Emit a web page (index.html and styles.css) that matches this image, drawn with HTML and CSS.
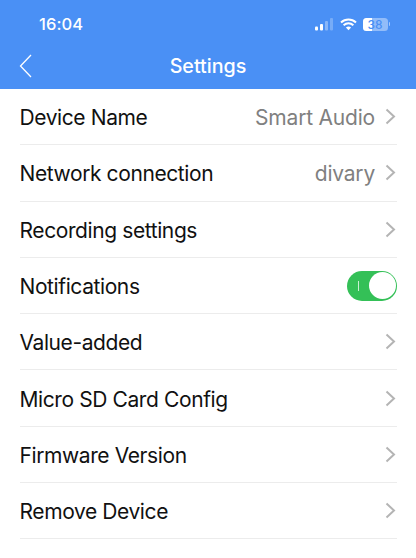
FILE: index.html
```html
<!DOCTYPE html>
<html lang="en">
<head>
<meta charset="utf-8">
<title>Settings</title>
<link rel="stylesheet" href="styles.css">
</head>
<body>
<header class="header">
  <div class="status">
    <span class="time">16:04</span>
    <div class="status-icons">
      <svg class="signal" width="19" height="13" viewBox="0 0 19 13"><rect x="0" y="8.5" width="3" height="4" rx="1" fill="#fff"/><rect x="5" y="6" width="3" height="6.500" rx="1" fill="#fff"/><rect x="10" y="3" width="3" height="9.500" rx="1" fill="#fff" opacity=".35"/><rect x="15" y="0" width="3" height="12.500" rx="1" fill="#fff" opacity=".25"/></svg>
      <svg class="wifi" width="17" height="13" viewBox="0 0 17 13"><path d="M1 4.600C5.300.6 11.700.6 16 4.600M3.600 7.300C6.500 4.700 10.500 4.700 13.400 7.300" fill="none" stroke="#fff" stroke-width="2"/><path d="M5.900 9.500C7.500 8.200 9.500 8.200 11.100 9.500L8.500 12.300Z" fill="#fff"/></svg>
      <div class="battery"><span class="battery-level"></span><span class="battery-text">38</span></div>
      <span class="battery-cap"></span>
    </div>
  </div>
  <div class="nav">
    <svg class="back" width="13" height="24" viewBox="0 0 13 24"><path d="M12 1 1.500 12 12 23" fill="none" stroke="#fff" stroke-width="1.300"/></svg>
    <h1 class="title">Settings</h1>
  </div>
</header>
<main class="list">
  <div class="row"><span class="label">Device Name</span><span class="value">Smart Audio</span><svg class="chev" width="11" height="17" viewBox="0 0 11 17"><path d="M1.500 1.500 9 8.500 1.500 15.500" fill="none" stroke="#b4b4b4" stroke-width="2"/></svg></div>
  <div class="row"><span class="label">Network connection</span><span class="value">divary</span><svg class="chev" width="11" height="17" viewBox="0 0 11 17"><path d="M1.500 1.500 9 8.500 1.500 15.500" fill="none" stroke="#b4b4b4" stroke-width="2"/></svg></div>
  <div class="row"><span class="label">Recording settings</span><svg class="chev" width="11" height="17" viewBox="0 0 11 17"><path d="M1.500 1.500 9 8.500 1.500 15.500" fill="none" stroke="#b4b4b4" stroke-width="2"/></svg></div>
  <div class="row"><span class="label">Notifications</span><div class="toggle"><span class="toggle-mark"></span><span class="knob"></span></div></div>
  <div class="row"><span class="label">Value-added</span><svg class="chev" width="11" height="17" viewBox="0 0 11 17"><path d="M1.500 1.500 9 8.500 1.500 15.500" fill="none" stroke="#b4b4b4" stroke-width="2"/></svg></div>
  <div class="row"><span class="label">Micro SD Card Config</span><svg class="chev" width="11" height="17" viewBox="0 0 11 17"><path d="M1.500 1.500 9 8.500 1.500 15.500" fill="none" stroke="#b4b4b4" stroke-width="2"/></svg></div>
  <div class="row"><span class="label">Firmware Version</span><svg class="chev" width="11" height="17" viewBox="0 0 11 17"><path d="M1.500 1.500 9 8.500 1.500 15.500" fill="none" stroke="#b4b4b4" stroke-width="2"/></svg></div>
  <div class="row"><span class="label">Remove Device</span><svg class="chev" width="11" height="17" viewBox="0 0 11 17"><path d="M1.500 1.500 9 8.500 1.500 15.500" fill="none" stroke="#b4b4b4" stroke-width="2"/></svg></div>
</main>
</body>
</html>
```
FILE: styles.css
```css
* { box-sizing: border-box; }
html, body { margin: 0; padding: 0; }
body {
  width: 416px;
  height: 558px;
  overflow: hidden;
  background: #fff;
  font-family: Inter, "Liberation Sans", sans-serif;
}
.header {
  height: 89px;
  background: #4a90f5;
  color: #fff;
  padding: 14px 20px 0;
}
.status {
  display: flex;
  align-items: center;
  justify-content: space-between;
  height: 20px;
  padding-left: 19px;
}
.time { font-size: 16.500px; font-weight: 500; letter-spacing: .1px; }
.status-icons { display: flex; align-items: center; padding-right: 6px; }
.signal { margin-right: 6px; }
.wifi { margin-right: 6px; }
.battery {
  position: relative;
  width: 25px;
  height: 13px;
  border-radius: 3.500px;
  background: rgba(255,255,255,.4);
  overflow: hidden;
  display: flex;
  align-items: center;
  justify-content: center;
}
.battery-level { position: absolute; left: 0; top: 0; bottom: 0; width: 38%; background: #fff; }
.battery-text { position: relative; font-size: 12px; font-weight: 500; color: #4a90f5; }
.battery-cap { width: 1.500px; height: 4px; margin-left: 1px; background: rgba(255,255,255,.5); border-radius: 0 1px 1px 0; }
.nav {
  position: relative;
  display: flex;
  align-items: center;
  justify-content: center;
  height: 24px;
  margin-top: 20px;
}
.back { position: absolute; left: -1px; top: 0; }
.title { margin: 0; font-size: 19.700px; font-weight: 500; }
.list { padding: 0 19.500px 0 19.500px; }
.row {
  display: flex;
  align-items: center;
  height: 56.300px;
  border-bottom: 1px solid #ececec;
}
.label { flex: 1; font-size: 21px; letter-spacing: -.4px; color: #111; padding-top: 2px; }
.value { font-size: 21px; letter-spacing: -.2px; color: #808080; margin-right: 10px; padding-top: 2px; }
.chev { display: block; margin-right: .500px; }
.toggle {
  position: relative;
  width: 50px;
  height: 30px;
  margin-right: -.500px;
  border-radius: 15px;
  background: #34c057;
}
.toggle-mark { position: absolute; left: 11px; top: 10px; width: 1px; height: 10px; background: #c9f0d3; }
.knob {
  position: absolute;
  right: 1.500px;
  top: 1.500px;
  width: 27px;
  height: 27px;
  border-radius: 50%;
  background: #fff;
}
```
